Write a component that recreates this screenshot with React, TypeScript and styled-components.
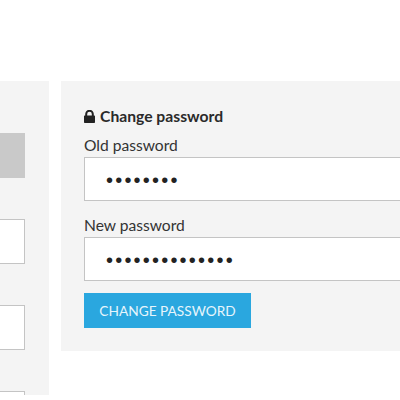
import { createGlobalStyle } from "styled-components";
import styled from "styled-components";

const GlobalStyle = createGlobalStyle`
  html, body {
    margin: 0;
    padding: 0;
    width: 400px;
    height: 400px;
    overflow: hidden;
    background: #fff;
    font-family: Lato, "Liberation Sans", sans-serif;
  }
`;

const Page = styled.div`
  display: flex;
  align-items: flex-start;
  gap: 12px;
  width: 400px;
  height: 400px;
  padding-top: 81px;
  box-sizing: border-box;
  overflow: hidden;
`;

const SidePanel = styled.aside`
  flex: 0 0 49px;
  height: 314px;
  box-sizing: border-box;
  padding: 52px 24px 0 0;
  background: #f4f4f4;
  overflow: hidden;
`;

const SideButton = styled.div`
  height: 45px;
  margin-bottom: 41px;
  background: #c9c9c9;
`;

const SideInput = styled.div`
  height: 45px;
  margin-bottom: 41px;
  box-sizing: border-box;
  background: #fff;
  border: 1px solid #c4c4c4;
  border-left: 0;
`;

const FormPanel = styled.section`
  flex: 0 0 400px;
  height: 270px;
  box-sizing: border-box;
  padding: 25px 0 0 23px;
  background: #f4f4f4;
`;

const Title = styled.h3`
  display: flex;
  align-items: center;
  gap: 5px;
  height: 20px;
  margin: 0 0 9px;
  font-size: 15.7px;
  font-weight: 700;
  line-height: 20px;
  color: #2a2a2a;
`;

const LockIcon = styled.svg`
  width: 11px;
  height: 13px;
  fill: #222;
`;

const Field = styled.div`
  margin-bottom: 14px;

  &:last-of-type {
    margin-bottom: 12px;
  }
`;

const Label = styled.label`
  display: block;
  height: 20px;
  font-size: 15.6px;
  line-height: 20px;
  color: #333;
`;

const PasswordInput = styled.input`
  display: block;
  width: 400px;
  height: 44px;
  box-sizing: border-box;
  margin: 2px 0 0;
  padding: 2px 0 0 21px;
  background: #fff;
  border: 1px solid #c4c4c4;
  border-radius: 0;
  outline: 0;
  font-family: "Liberation Sans", sans-serif;
  font-size: 20px;
  letter-spacing: 2.2px;
  color: #222;
`;

const SubmitButton = styled.button`
  display: block;
  width: 167px;
  height: 35px;
  padding: 0;
  background: #2aa7df;
  border: 0;
  border-radius: 0;
  font-family: Lato, "Liberation Sans", sans-serif;
  font-size: 13.7px;
  line-height: 35px;
  color: #e6f5fc;
`;

export default function App() {
  return (
    <>
      <GlobalStyle />
      <Page>
        <SidePanel>
          <SideButton />
          <SideInput />
          <SideInput />
          <SideInput />
        </SidePanel>
        <FormPanel>
          <Title>
            <LockIcon viewBox="0 0 11 13">
              <path d="M1.2 5.500V4a4.300 4.300 0 0 1 8.600 0v1.500h.2c.6 0 1 .4 1 1V12c0 .6-.4 1-1 1H1c-.6 0-1-.4-1-1V6.500c0-.6.4-1 1-1h.2Zm2 0h4.600V4a2.300 2.300 0 0 0-4.600 0v1.500Z" />
            </LockIcon>
            Change password
          </Title>
          <Field>
            <Label>Old password</Label>
            <PasswordInput type="password" value="abcdefgh" readOnly />
          </Field>
          <Field>
            <Label>New password</Label>
            <PasswordInput type="password" value="abcdefghijklmn" readOnly />
          </Field>
          <SubmitButton>CHANGE PASSWORD</SubmitButton>
        </FormPanel>
      </Page>
    </>
  );
}
